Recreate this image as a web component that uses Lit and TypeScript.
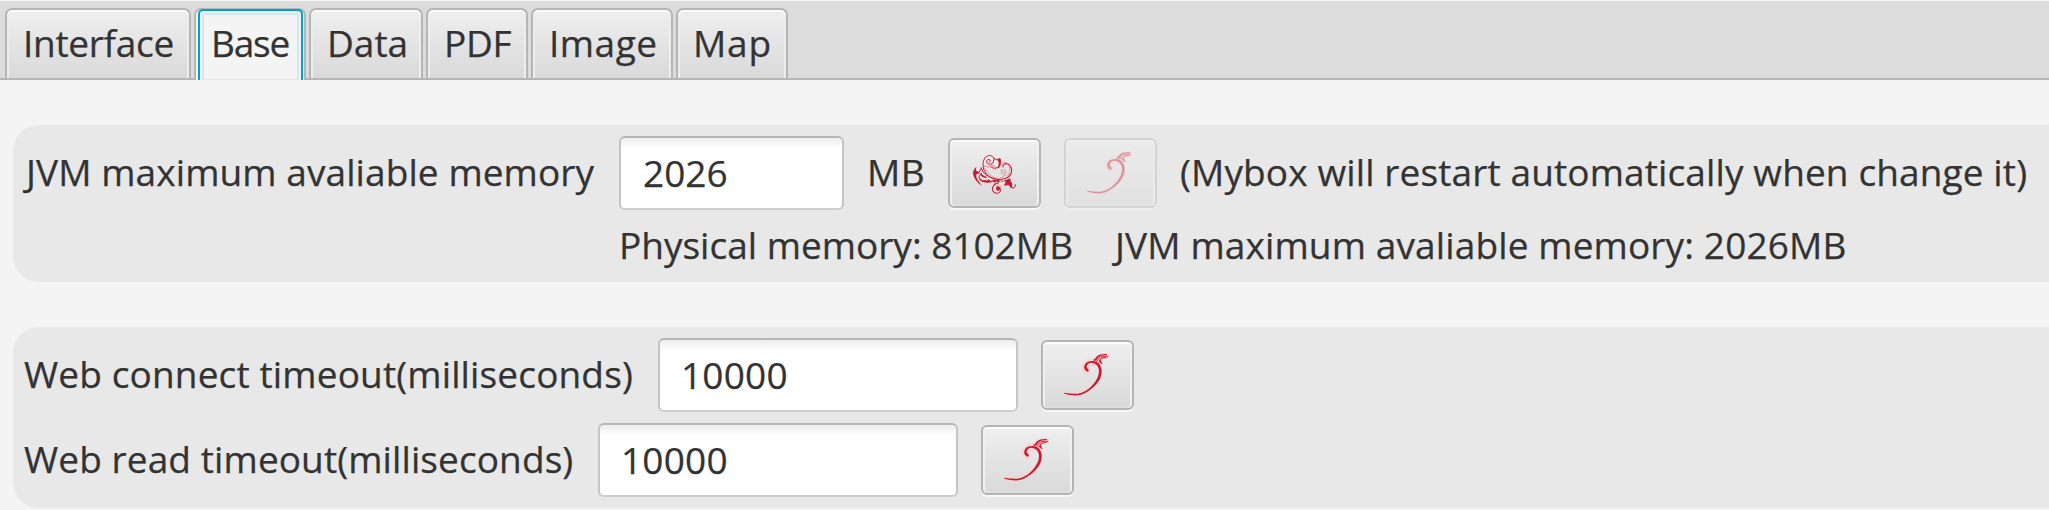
import { LitElement, html, css, svg } from "lit";
import { customElement, property, state } from "lit/decorators.js";
import { classMap } from "lit/directives/class-map.js";

@customElement("ornament-icon")
class OrnamentIcon extends LitElement {
  @property() name = "swirl";

  static styles = css`
    :host { display: block; }
    svg { display: block; }
    .line { fill: none; stroke: #c41e35; stroke-linecap: round; stroke-linejoin: round; }
    .solid { fill: #c41e35; }
    .glow { fill: none; stroke: #fbd0cd; stroke-linecap: round; stroke-linejoin: round; opacity: 0.8; }
    .pale { fill: none; stroke: #e2808a; stroke-linecap: round; }
  `;

  private swirl() {
    return svg`
      <path class="glow" stroke-width="11" d="M18 147Q56 155 92 128Q122 104 122 78Q121 55 105 50"/>
      <path class="glow" stroke-width="21" d="M106 54Q91 46 80 57Q72 66 80 77"/>
      <path class="glow" stroke-width="11" d="M104 46Q111 31 141 28M112 47Q117 37 142 35M121 49Q121 40 132 38"/>
      <path class="solid" d="M13 143Q35 147 53 146Q77 142 96 122Q118 98 117 77Q115 58 99 54Q87 52 82 59Q78 66 82 70Q88 74 86 79Q81 82 76 76Q69 67 76 56Q84 46 101 48Q122 52 125 74Q128 101 100 127Q77 148 54 151Q33 152 13 146Z"/>
      <path class="solid" d="M99 45Q106 42 111 34Q120 26 141 27L140 30Q120 30 114 39Q110 47 104 48Z"/>
      <path class="line" stroke-width="3" d="M109 49Q115 45 118 39Q125 32 143 34M116 51Q122 47 123 41Q127 37 138 38"/>
      <path class="solid" d="M116 49Q121 45 124 44Q122 52 130 57Q121 58 118 50Z"/>
      <circle cx="138" cy="156" r="1" fill="#fbd0cd"/>`;
  }

  private flourish() {
    return svg`
      <path class="line" stroke-width="3" d="M65 89Q51 72 54 55Q57 35 70 32Q85 30 87 43Q87 56 76 58Q64 58 65 48Q68 41 74 44Q79 48 73 52"/>
      <path class="line" stroke-width="3" d="M86 40Q94 48 104 42M106 42Q109 59 98 67Q91 73 80 68"/>
      <path class="pale" stroke-width="3" d="M58 63Q68 69 79 64Q92 57 91 74M75 60L84 61"/>
      <path class="solid" d="M92 43Q102 44 104 38L106 48Q110 58 104 67L97 72Q103 60 101 52Q99 45 92 43Z"/>
      <path class="line" stroke-width="3" d="M48 68Q52 84 66 91"/>
      <path class="line" stroke-width="3.2" d="M66 90Q87 106 110 103Q133 100 139 84Q143 63 127 56Q113 55 114 66"/>
      <path class="pale" stroke-width="2.4" d="M58 69Q68 86 85 97Q99 103 111 98Q128 88 122 76Q114 70 113 80Q117 86 121 82M110 62Q108 51 118 52Q126 50 127 58M132 61Q139 79 128 93M110 73Q104 88 119 91"/>
      <path class="solid" d="M35 65Q24 72 24 86Q27 102 42 116L51 122L38 105Q32 94 34 88Q40 83 49 87Q40 79 35 78Q30 73 35 65Z"/>
      <path class="line" stroke-width="3" d="M49 86Q38 94 45 105Q54 113 63 107M37 84Q47 80 49 70"/>
      <path class="solid" d="M49 83Q54 94 68 96L62 99Q53 98 48 92ZM45 100Q50 108 64 107L72 102L71 106L84 111Q66 115 54 111Q45 108 45 100Z"/>
      <path class="line" stroke-width="2.4" d="M70 107Q84 112 94 107Q119 111 130 104"/>
      <path class="solid" d="M79 105Q92 106 102 102Q106 108 100 115L94 108L89 117L88 110ZM120 106Q130 103 136 100Q136 111 141 115Q144 125 137 130Q135 120 129 119Q124 123 116 121Q124 115 120 106Z"/>
      <path class="line" stroke-width="3" d="M132 117Q138 133 148 128Q152 124 151 119"/>
      <path class="line" stroke-width="3.2" d="M99 114Q86 117 82 129Q83 145 96 145Q108 143 106 133Q104 124 95 126"/>
      <circle class="solid" cx="99" cy="131" r="6"/>
      <path class="pale" stroke-width="2" d="M99 119Q111 123 108 135"/>`;
  }

  render() {
    return this.name === "swirl"
      ? html`<svg width="56" height="56" viewBox="0 0 168 168">${this.swirl()}</svg>`
      : html`<svg width="60" height="55" viewBox="0 0 180 165">${this.flourish()}</svg>`;
  }
}

@customElement("icon-button")
class IconButton extends LitElement {
  @property() icon = "swirl";
  @property({ type: Boolean, reflect: true }) disabled = false;

  static styles = css`
    :host { display: block; flex: none; }
    :host([disabled]) { opacity: 0.4; }
    button {
      display: flex; align-items: flex-start; justify-content: flex-start;
      box-sizing: border-box; width: 93px; height: 70px; margin: 0;
      border: 2px solid #b5b5b5; border-radius: 6px;
      background: linear-gradient(#efefef, #d9d9d9);
      box-shadow: inset 0 2px 0 #fbfbfb, inset 2px 0 0 #f0f0f0, inset -2px 0 0 #f0f0f0, inset 0 -2px 0 #dedede, 0 2px 0 #f8f8f8;
    }
    .swirl { padding: 3px 0 0 17px; }
    .flourish { padding: 5px 0 0 15px; }
  `;

  render() {
    return html`<button class=${this.icon} ?disabled=${this.disabled}>
      <ornament-icon .name=${this.icon}></ornament-icon>
    </button>`;
  }
}

const TABS = ["Interface", "Base", "Data", "PDF", "Image", "Map"];

@customElement("app-root")
class AppRoot extends LitElement {
  @state() private selected = "Base";

  static styles = css`
    :host {
      display: flex; flex-direction: column; box-sizing: border-box;
      width: 100%; height: 510px; overflow: hidden;
      background: #f4f4f4; color: #333;
      font: 37px/50px "Open Sans", "Noto Sans", sans-serif;
      -webkit-text-stroke: 0.25px #333;
      white-space: pre;
    }
    .tabs {
      display: flex; align-items: flex-start; flex: none; box-sizing: border-box;
      height: 80px; padding: 7px 0 0 5px;
      border-top: 1px solid #f7f7f7; border-bottom: 2px solid #b5b5b5;
      background: #dcdcdc;
    }
    .tab {
      box-sizing: border-box; flex: none; height: 70px; padding: 8px 0 0 16px;
      border: 2px solid #b5b5b5; border-bottom: 0; border-radius: 7px 7px 0 0;
      background: linear-gradient(#efefef, #d9d9d9);
      box-shadow: inset 0 2px 0 #fbfbfb, inset 2px 0 0 #ededed, inset -2px 0 0 #ededed;
    }
    .interface { width: 186px; margin-right: 3px; letter-spacing: -0.3px; }
    .base { width: 112px; margin-right: 3px; letter-spacing: -1.2px; }
    .data { width: 114px; margin-right: 3px; }
    .pdf { width: 102px; margin-right: 3px; letter-spacing: -0.3px; }
    .image { width: 142px; margin-right: 3px; letter-spacing: 0.5px; }
    .map { width: 112px; padding-left: 15px; letter-spacing: 0.8px; }
    .active { height: 72px; padding: 0; background: #f4f4f4; box-shadow: none; }
    .focus {
      box-sizing: border-box; width: 105px; height: 71px; margin: -1px 0 0 2px; padding: 7px 0 0 11px;
      border: 2px solid #039ed3; border-bottom: 0; border-radius: 5px 5px 0 0;
      box-shadow: inset 0 2px 0 #f4f4f4, inset 2px 0 0 #f4f4f4, inset -2px 0 0 #f4f4f4, inset 0 4px 0 #d3e9f1, inset 4px 0 0 #d3e9f1, inset -4px 0 0 #d3e9f1, inset 0 -1px 0 #d3e9f1;
    }
    .panel {
      display: flex; flex-direction: column; flex: none; box-sizing: border-box;
      margin-left: 13px; border-radius: 26px 0 0 26px; background: #e8e8e8;
    }
    .memory { height: 157px; margin-top: 45px; padding-top: 11px; }
    .web { height: 181px; margin-top: 45px; padding-top: 11px; gap: 11px; }
    .row { display: flex; align-items: flex-start; flex: none; height: 74px; }
    .row icon-button { margin-top: 2px; }
    .label { box-sizing: border-box; flex: none; padding: 11px 0 0 11px; }
    .jvm { width: 606px; padding-left: 13px; letter-spacing: 0.09px; }
    .connect { width: 645px; letter-spacing: 0.14px; }
    .read { width: 585px; letter-spacing: 0.1px; }
    .unit { width: 104px; padding-left: 23px; letter-spacing: 0.5px; }
    .hint { padding-left: 23px; letter-spacing: 0.12px; }
    .field {
      box-sizing: border-box; flex: none; width: 360px; height: 74px; margin: 0 23px 0 0; padding: 0 0 2px 21px;
      border: 2px solid; border-color: #b5b5b5 #c4c4c4 #cdcdcd; border-radius: 6px;
      background: linear-gradient(#ededed, #fff 11px); color: #333; outline: none;
      font: inherit; letter-spacing: 0.2px;
    }
    .short { width: 225px; margin-right: 0; padding-left: 22px; letter-spacing: 0; }
    .gap { margin-right: 23px; }
    .info { display: flex; flex: none; padding: 10px 0 0 606px; }
    .physical { width: 496px; }
    .maximum { letter-spacing: 0.13px; }
  `;

  private tab(name: string) {
    const active = name === this.selected;
    return html`<div class=${classMap({ tab: true, [name.toLowerCase()]: true, active })}
      @click=${() => (this.selected = name)}>${active ? html`<div class="focus">${name}</div>` : name}</div>`;
  }

  render() {
    return html`
      <div class="tabs">${TABS.map((name) => this.tab(name))}</div>
      <div class="panel memory">
        <div class="row">
          <div class="label jvm">JVM maximum avaliable memory</div>
          <input class="field short" .value=${"2026"} />
          <div class="label unit">MB</div>
          <icon-button class="gap" icon="flourish"></icon-button>
          <icon-button disabled></icon-button>
          <div class="label hint">(Mybox will restart automatically when change it)</div>
        </div>
        <div class="info">
          <div class="physical">Physical memory: 8102MB</div>
          <div class="maximum">JVM maximum avaliable memory: 2026MB</div>
        </div>
      </div>
      <div class="panel web">
        <div class="row">
          <div class="label connect">Web connect timeout(milliseconds)</div>
          <input class="field" .value=${"10000"} />
          <icon-button></icon-button>
        </div>
        <div class="row">
          <div class="label read">Web read timeout(milliseconds)</div>
          <input class="field" .value=${"10000"} />
          <icon-button></icon-button>
        </div>
      </div>`;
  }
}
